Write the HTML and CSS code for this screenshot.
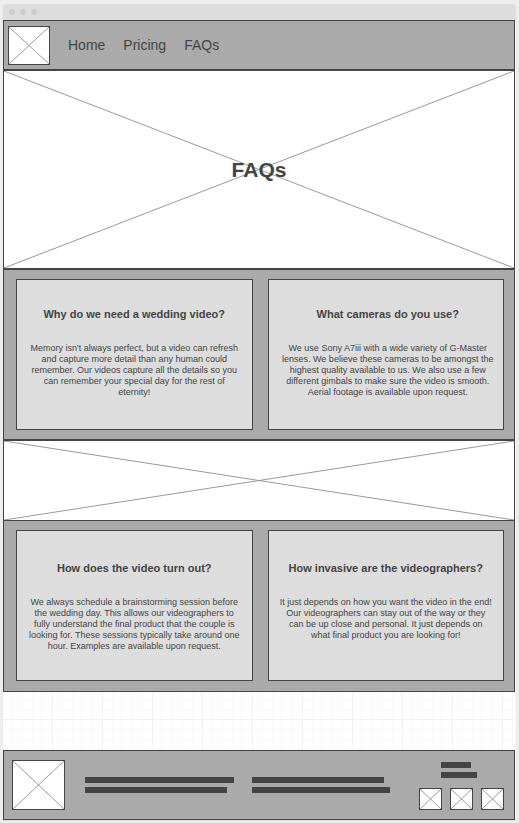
FILE: index.html
```html
<!DOCTYPE html>
<html lang="en">
<head>
<meta charset="utf-8">
<meta name="viewport" content="width=device-width, initial-scale=1">
<title>FAQs</title>
<link rel="stylesheet" href="styles.css">
</head>
<body>
<div class="window">
  <div class="titlebar"><span class="dot"></span><span class="dot"></span><span class="dot"></span></div>
  <header class="panel header">
    <svg class="image logo" viewBox="0 0 100 100" preserveAspectRatio="none" aria-hidden="true"><path d="M0 0L100 100M0 100L100 0"/></svg>
    <nav class="nav">
      <a href="#">Home</a>
      <a href="#">Pricing</a>
      <a href="#">FAQs</a>
    </nav>
  </header>
  <main>
    <section class="hero">
      <svg class="cross" viewBox="0 0 100 100" preserveAspectRatio="none" aria-hidden="true"><path d="M0 0L100 100M0 100L100 0"/></svg>
      <h1>FAQs</h1>
    </section>
    <section class="panel faqs">
      <article class="card">
        <h2>Why do we need a wedding video?</h2>
        <p>Memory isn't always perfect, but a video can refresh and capture more detail than any human could remember. Our videos capture all the details so you can remember your special day for the rest of eternity!</p>
      </article>
      <article class="card card-shifted">
        <h2>What cameras do you use?</h2>
        <p>We use Sony A7iii with a wide variety of G-Master lenses. We believe these cameras to be amongst the highest quality available to us. We also use a few different gimbals to make sure the video is smooth. Aerial footage is available upon request.</p>
      </article>
    </section>
    <div class="banner">
      <svg class="cross" viewBox="0 0 100 100" preserveAspectRatio="none" aria-hidden="true"><path d="M0 0L100 100M0 100L100 0"/></svg>
    </div>
    <section class="panel faqs faqs-low">
      <article class="card">
        <h2>How does the video turn out?</h2>
        <p>We always schedule a brainstorming session before the wedding day. This allows our videographers to fully understand the final product that the couple is looking for. These sessions typically take around one hour. Examples are available upon request.</p>
      </article>
      <article class="card">
        <h2>How invasive are the videographers?</h2>
        <p>It just depends on how you want the video in the end! Our videographers can stay out of the way or they can be up close and personal. It just depends on what final product you are looking for!</p>
      </article>
    </section>
    <div class="canvas-gap"></div>
  </main>
  <footer class="panel footer">
    <svg class="image mark" viewBox="0 0 100 100" preserveAspectRatio="none" aria-hidden="true"><path d="M0 0L100 100M0 100L100 0"/></svg>
    <div class="lines lines-first"><span class="bar"></span><span class="bar bar-95"></span></div>
    <div class="lines lines-second"><span class="bar bar-96"></span><span class="bar"></span></div>
    <div class="social">
      <div class="lines lines-small"><span class="bar bar-83"></span><span class="bar"></span></div>
      <div class="icons">
        <svg class="image icon" viewBox="0 0 100 100" preserveAspectRatio="none" aria-hidden="true"><path d="M0 0L100 100M0 100L100 0"/></svg>
        <svg class="image icon" viewBox="0 0 100 100" preserveAspectRatio="none" aria-hidden="true"><path d="M0 0L100 100M0 100L100 0"/></svg>
        <svg class="image icon" viewBox="0 0 100 100" preserveAspectRatio="none" aria-hidden="true"><path d="M0 0L100 100M0 100L100 0"/></svg>
      </div>
    </div>
  </footer>
</div>
</body>
</html>
```
FILE: styles.css
```css
:root {
  --ink: #444;
  --panel: #aaa;
  --soft: #ddd;
  --line: #999;
}

* {
  box-sizing: border-box;
}

body {
  margin: 0;
  padding: 4px 3px 3px;
  background: #eee;
  color: var(--ink);
  font-family: "Liberation Sans", Arial, sans-serif;
}

h1,
h2,
p {
  margin: 0;
}

.window {
  border-radius: 3px 3px 0 0;
  background: #fff;
  box-shadow: 0 1px 1px #ddd;
}

.titlebar {
  display: flex;
  align-items: center;
  gap: 5px;
  height: 16px;
  padding: 0 6px;
  border-radius: 3px 3px 0 0;
  background: var(--soft);
}

.dot {
  width: 6px;
  height: 6px;
  border-radius: 50%;
  background: #ccc;
}

.header,
main,
.footer {
  margin-right: 1px;
}

.panel {
  border: 1px solid var(--ink);
  background: var(--panel);
}

svg path {
  fill: none;
  stroke: var(--line);
  stroke-width: 1px;
  vector-effect: non-scaling-stroke;
}

.image {
  flex: none;
  display: block;
  border: 1px solid var(--ink);
  background: #fff;
}

.header {
  display: flex;
  align-items: center;
  gap: 18px;
  padding: 5px 4px 4px;
}

.logo {
  width: 42px;
  height: 39px;
}

.nav {
  display: flex;
  gap: 18px;
  padding-bottom: 2px;
  font-size: 14px;
  line-height: 16px;
}

.nav a {
  color: inherit;
  text-decoration: none;
}

.hero,
.banner {
  display: grid;
  place-items: center;
  border: 1px solid var(--ink);
  background: #fff;
}

.hero {
  height: 199px;
}

.banner {
  height: 80px;
  border-bottom: 0;
}

.cross {
  display: block;
  grid-area: 1 / 1;
  width: 100%;
  height: 100%;
  min-height: 0;
}

.hero h1 {
  grid-area: 1 / 1;
  z-index: 1;
  font-size: 21px;
  line-height: 24px;
}

.faqs {
  display: grid;
  grid-template-columns: 1fr 1fr;
  gap: 15px;
  padding: 9px 10px 9px 12px;
}

.faqs-low {
  padding-bottom: 10px;
}

.card {
  min-height: 151px;
  padding: 28px 10px;
  border: 1px solid var(--ink);
  background: var(--soft);
  text-align: center;
}

.card-shifted {
  padding-right: 8px;
  padding-left: 12px;
}

.faqs-low .card {
  padding: 31px 10px 24px;
}

.card h2 {
  margin-bottom: 22px;
  font-size: 11px;
  line-height: 13px;
}

.card p {
  font-size: 9px;
  line-height: 11px;
}

.canvas-gap {
  height: 58px;
  background:
    linear-gradient(90deg, #f2f2f2 1px, transparent 1px) 49px 0 / 50px 50px,
    linear-gradient(#f2f2f2 1px, transparent 1px) 0 27px / 50px 50px,
    linear-gradient(90deg, #f8f8f8 1px, transparent 1px) 9px 0 / 10px 10px,
    linear-gradient(#f8f8f8 1px, transparent 1px) 0 7px / 10px 10px,
    #fff;
}

.footer {
  display: flex;
  align-items: center;
  padding: 9px 10px 9px 8px;
}

.mark {
  width: 53px;
  height: 50px;
}

.lines {
  display: grid;
  gap: 4px;
}

.lines-first {
  flex: 149 1 0;
  margin-left: 20px;
}

.lines-second {
  flex: 138 1 0;
  margin-left: 18px;
}

.lines-small {
  width: 36px;
  margin-left: 22px;
}

.bar {
  height: 6px;
  background: var(--ink);
}

.bar-96 {
  width: 96%;
}

.bar-95 {
  width: 95%;
}

.bar-83 {
  width: 83%;
}

.social {
  display: grid;
  gap: 10px;
  margin-left: 29px;
  padding-top: 2px;
}

.icons {
  display: flex;
  gap: 8px;
}

.icon {
  width: 23px;
  height: 22px;
}
```
